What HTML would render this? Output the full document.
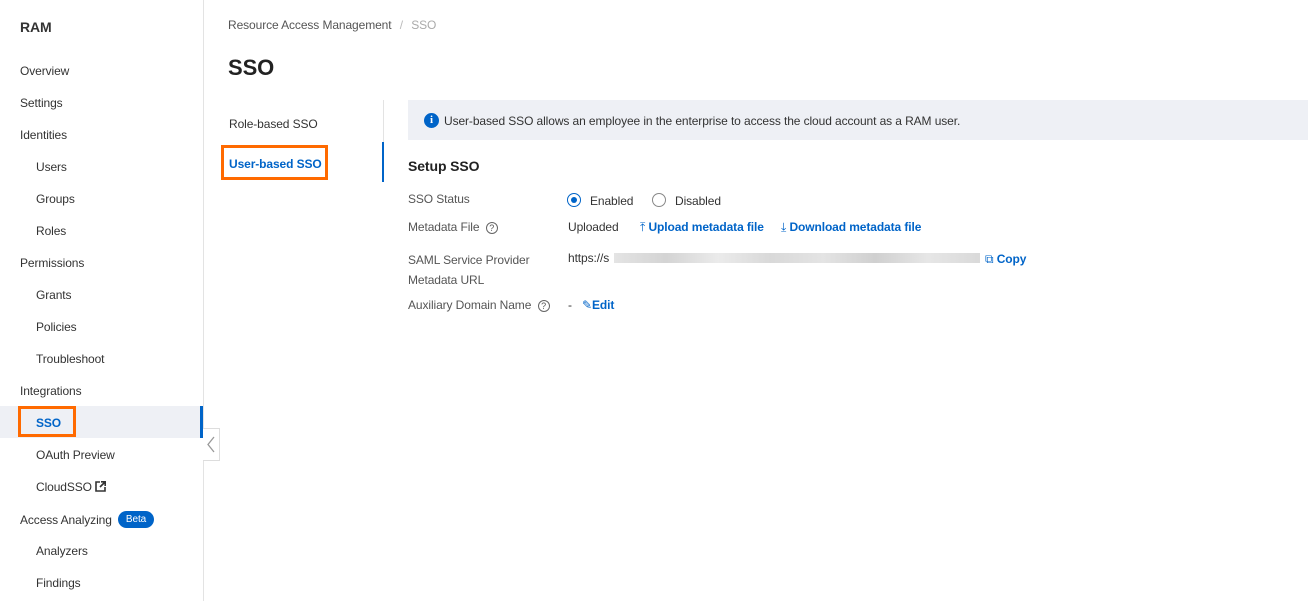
<!DOCTYPE html>
<html><head><meta charset="utf-8"><style>
*{box-sizing:border-box;margin:0;padding:0}
body{width:1308px;height:601px;overflow:hidden;background:#fff;font-family:"Liberation Sans",Arial,sans-serif;color:#333;font-size:12px;position:relative;letter-spacing:-0.1px}
.a{position:absolute;white-space:nowrap}
.side{position:absolute;left:0;top:0;width:204px;height:601px;border-right:1px solid #e3e3e3}
.ni{position:absolute;left:20px;font-size:12px;color:#333}
.sub{left:36px}
.blue{color:#0064c8}
.lbl{color:#555}
</style></head><body>
<div class="side">
<div class="a" style="left:20px;top:19px;font-size:14px;font-weight:bold;color:#333">RAM</div>
<div class="ni" style="top:64px">Overview</div>
<div class="ni" style="top:96px">Settings</div>
<div class="ni" style="top:128px">Identities</div>
<div class="ni sub" style="top:160px">Users</div>
<div class="ni sub" style="top:192px">Groups</div>
<div class="ni sub" style="top:224px">Roles</div>
<div class="ni" style="top:256px">Permissions</div>
<div class="ni sub" style="top:288px">Grants</div>
<div class="ni sub" style="top:320px">Policies</div>
<div class="ni sub" style="top:352px">Troubleshoot</div>
<div class="ni" style="top:384px">Integrations</div>
<div class="a" style="left:0;top:406px;width:203px;height:32px;background:#eef0f5"></div>
<div class="a" style="left:200px;top:406px;width:3px;height:32px;background:#0064c8"></div>
<div class="a" style="left:18px;top:406px;width:58px;height:31px;border:3px solid #ff6a00"></div>
<div class="ni sub blue" style="top:416px;font-weight:bold">SSO</div>
<div class="ni sub" style="top:448px">OAuth Preview</div>
<div class="ni sub" style="top:480px">CloudSSO <svg width="11" height="11" viewBox="0 0 11 11" style="vertical-align:-1px"><path d="M5 1H1v9h9V6" fill="none" stroke="#333" stroke-width="1.6"/><path d="M6 0.8h4.2V5M10 1L5 6" fill="none" stroke="#333" stroke-width="1.6"/></svg></div>
<div class="ni" style="top:513px">Access Analyzing</div>
<div class="a" style="left:118px;top:511px;width:36px;height:17px;border-radius:9px;background:#0064c8;color:#fff;font-size:10px;text-align:center;line-height:17px">Beta</div>
<div class="ni sub" style="top:544px">Analyzers</div>
<div class="ni sub" style="top:576px">Findings</div>
</div>
<div class="a" style="left:203px;top:428px;width:17px;height:33px;border:1px solid #ddd;border-left:none;background:#fff"><svg width="16" height="31" viewBox="0 0 16 31"><path d="M11 8L5 15.5L11 23" fill="none" stroke="#999" stroke-width="1.3"/></svg></div>

<div class="a" style="left:228px;top:18px;color:#555">Resource Access Management <span style="color:#bbb;margin:0 5px">/</span> <span style="color:#aaa">SSO</span></div>
<div class="a" style="left:228px;top:55px;font-size:22px;font-weight:bold;color:#222">SSO</div>

<div class="a" style="left:383px;top:100px;width:1px;height:82px;background:#e3e3e3"></div>
<div class="a" style="left:382px;top:142px;width:2px;height:40px;background:#0064c8"></div>
<div class="a" style="left:229px;top:117px;color:#333">Role-based SSO</div>
<div class="a" style="left:221px;top:145px;width:107px;height:35px;border:3px solid #ff6a00"></div>
<div class="a blue" style="left:229px;top:157px;font-weight:bold">User-based SSO</div>

<div class="a" style="left:408px;top:100px;width:900px;height:40px;background:#eef0f5"></div>
<div class="a" style="left:424px;top:113px;width:15px;height:15px;border-radius:50%;background:#0064c8;color:#fff;font-size:11px;font-weight:bold;text-align:center;line-height:15px;font-family:'Liberation Serif',serif">i</div>
<div class="a" style="left:444px;top:114px;color:#333">User-based SSO allows an employee in the enterprise to access the cloud account as a RAM user.</div>

<div class="a" style="left:408px;top:158px;font-size:14px;font-weight:bold;color:#222">Setup SSO</div>
<div class="a lbl" style="left:408px;top:192px">SSO Status</div>
<div class="a" style="left:567px;top:193px;width:14px;height:14px;border-radius:50%;border:1px solid #0064c8"><div style="position:absolute;left:3px;top:3px;width:6px;height:6px;border-radius:50%;background:#0064c8"></div></div>
<div class="a" style="left:590px;top:194px;color:#333">Enabled</div>
<div class="a" style="left:652px;top:193px;width:14px;height:14px;border-radius:50%;border:1px solid #888"></div>
<div class="a" style="left:675px;top:194px;color:#333">Disabled</div>

<div class="a lbl" style="left:408px;top:220px">Metadata File <span style="display:inline-block;width:12px;height:12px;border:1px solid #666;border-radius:50%;font-size:9px;text-align:center;line-height:10px;margin-left:3px">?</span></div>
<div class="a" style="left:568px;top:220px">Uploaded</div>
<div class="a blue" style="left:640px;top:220px;font-weight:bold"><span style="font-weight:normal">⤒</span> Upload metadata file</div>
<div class="a blue" style="left:781px;top:220px;font-weight:bold"><span style="font-weight:normal">⤓</span> Download metadata file</div>

<div class="a lbl" style="left:408px;top:250px;line-height:20px">SAML Service Provider<br>Metadata URL</div>
<div class="a" style="left:568px;top:251px">https://s</div>
<div class="a" style="left:614px;top:253px;width:366px;height:10px;background:linear-gradient(90deg,#ddd,#c9c9c9,#e6e6e6,#cfcfcf,#ddd,#c4c4c4,#e0e0e0,#d0d0d0);opacity:.8"></div>
<div class="a blue" style="left:985px;top:252px;font-weight:bold"><span style="font-weight:normal">⧉</span> Copy</div>

<div class="a lbl" style="left:408px;top:298px">Auxiliary Domain Name <span style="display:inline-block;width:12px;height:12px;border:1px solid #666;border-radius:50%;font-size:9px;text-align:center;line-height:10px;margin-left:3px">?</span></div>
<div class="a" style="left:568px;top:298px">-</div>
<div class="a blue" style="left:582px;top:298px;font-weight:bold"><span style="font-weight:normal">✎</span>Edit</div>
</body></html>
